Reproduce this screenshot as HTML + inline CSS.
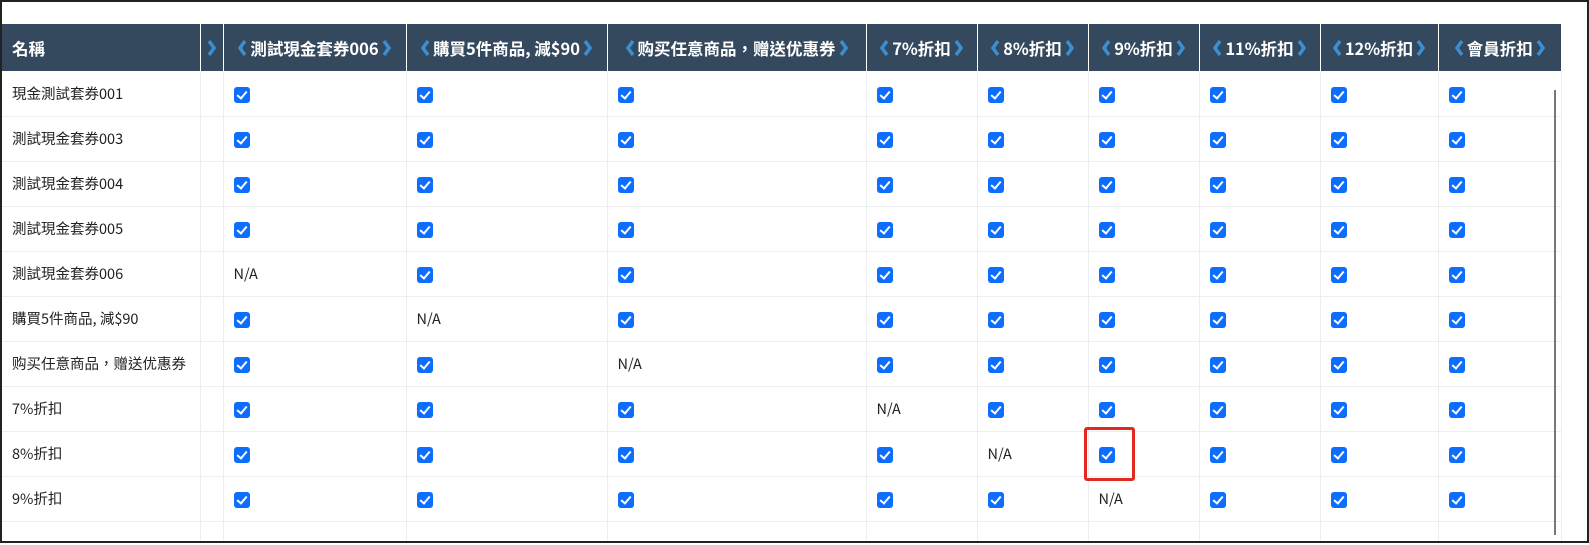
<!DOCTYPE html>
<html><head><meta charset="utf-8"><style>
*{box-sizing:border-box;margin:0;padding:0}
html,body{width:1589px;height:545px;overflow:hidden;background:#fff}
.frame{position:absolute;left:0;top:0;width:1589px;height:543px;border:2px solid #222;overflow:hidden}
table{position:absolute;left:0;top:22px;border-collapse:collapse;table-layout:fixed;font-family:"Noto Sans CJK TC","Liberation Sans",sans-serif}
th{background:#34495e;color:#fff;font-size:16.5px;font-weight:bold;height:47px;border-left:1px solid #fff;white-space:nowrap;padding:0}
th:first-child{border-left:none;text-align:left;padding-left:10px}
th .c{display:flex;align-items:center;justify-content:center;gap:2px}
td{height:45px;border:1px solid #eceef0;border-top:none;font-size:14.5px;color:#222;padding-left:10px;white-space:nowrap}
td:first-child{border-left:none;padding-left:10px}
.k{display:inline-block;width:16px;height:16px;background:#0d6efd;border-radius:3px;vertical-align:middle;position:relative}
.k:after{content:"";position:absolute;left:5px;top:2px;width:4px;height:8px;border:solid #fff;border-width:0 2px 2px 0;transform:rotate(40deg)}
svg{display:block}
.sb{position:absolute;left:1554px;top:90px;width:2px;height:445px;background:#777}
.red{position:absolute;left:1084px;top:427px;width:51px;height:54px;border:3px solid #e02a20;border-radius:3px}
</style></head><body>
<div class="frame">
<table>
<colgroup><col style="width:198px"><col style="width:23px"><col style="width:183px"><col style="width:201px"><col style="width:259px"><col style="width:111px"><col style="width:111px"><col style="width:111px"><col style="width:121px"><col style="width:118px"><col style="width:123px"></colgroup>
<tr>
<th>名稱</th>
<th style="border-left:1px solid #fff"><div class="c"><svg width="11" height="18"><polyline points="3,2 8,9 3,16" fill="none" stroke="#3b8ed0" stroke-width="3.5"/></svg></div></th>
<th><div class="c"><svg width="11" height="18"><polyline points="8,2 3,9 8,16" fill="none" stroke="#3b8ed0" stroke-width="3.5"/></svg>測試現金套券006<svg width="11" height="18"><polyline points="3,2 8,9 3,16" fill="none" stroke="#3b8ed0" stroke-width="3.5"/></svg></div></th>
<th><div class="c"><svg width="11" height="18"><polyline points="8,2 3,9 8,16" fill="none" stroke="#3b8ed0" stroke-width="3.5"/></svg>購買5件商品, 減$90<svg width="11" height="18"><polyline points="3,2 8,9 3,16" fill="none" stroke="#3b8ed0" stroke-width="3.5"/></svg></div></th>
<th><div class="c"><svg width="11" height="18"><polyline points="8,2 3,9 8,16" fill="none" stroke="#3b8ed0" stroke-width="3.5"/></svg>购买任意商品，赠送优惠券<svg width="11" height="18"><polyline points="3,2 8,9 3,16" fill="none" stroke="#3b8ed0" stroke-width="3.5"/></svg></div></th>
<th><div class="c"><svg width="11" height="18"><polyline points="8,2 3,9 8,16" fill="none" stroke="#3b8ed0" stroke-width="3.5"/></svg>7%折扣<svg width="11" height="18"><polyline points="3,2 8,9 3,16" fill="none" stroke="#3b8ed0" stroke-width="3.5"/></svg></div></th>
<th><div class="c"><svg width="11" height="18"><polyline points="8,2 3,9 8,16" fill="none" stroke="#3b8ed0" stroke-width="3.5"/></svg>8%折扣<svg width="11" height="18"><polyline points="3,2 8,9 3,16" fill="none" stroke="#3b8ed0" stroke-width="3.5"/></svg></div></th>
<th><div class="c"><svg width="11" height="18"><polyline points="8,2 3,9 8,16" fill="none" stroke="#3b8ed0" stroke-width="3.5"/></svg>9%折扣<svg width="11" height="18"><polyline points="3,2 8,9 3,16" fill="none" stroke="#3b8ed0" stroke-width="3.5"/></svg></div></th>
<th><div class="c"><svg width="11" height="18"><polyline points="8,2 3,9 8,16" fill="none" stroke="#3b8ed0" stroke-width="3.5"/></svg>11%折扣<svg width="11" height="18"><polyline points="3,2 8,9 3,16" fill="none" stroke="#3b8ed0" stroke-width="3.5"/></svg></div></th>
<th><div class="c"><svg width="11" height="18"><polyline points="8,2 3,9 8,16" fill="none" stroke="#3b8ed0" stroke-width="3.5"/></svg>12%折扣<svg width="11" height="18"><polyline points="3,2 8,9 3,16" fill="none" stroke="#3b8ed0" stroke-width="3.5"/></svg></div></th>
<th><div class="c"><svg width="11" height="18"><polyline points="8,2 3,9 8,16" fill="none" stroke="#3b8ed0" stroke-width="3.5"/></svg>會員折扣<svg width="11" height="18"><polyline points="3,2 8,9 3,16" fill="none" stroke="#3b8ed0" stroke-width="3.5"/></svg></div></th>
</tr>
<tr><td>現金測試套券001</td><td></td><td><i class="k"></i></td><td><i class="k"></i></td><td><i class="k"></i></td><td><i class="k"></i></td><td><i class="k"></i></td><td><i class="k"></i></td><td><i class="k"></i></td><td><i class="k"></i></td><td><i class="k"></i></td></tr>
<tr><td>測試現金套券003</td><td></td><td><i class="k"></i></td><td><i class="k"></i></td><td><i class="k"></i></td><td><i class="k"></i></td><td><i class="k"></i></td><td><i class="k"></i></td><td><i class="k"></i></td><td><i class="k"></i></td><td><i class="k"></i></td></tr>
<tr><td>測試現金套券004</td><td></td><td><i class="k"></i></td><td><i class="k"></i></td><td><i class="k"></i></td><td><i class="k"></i></td><td><i class="k"></i></td><td><i class="k"></i></td><td><i class="k"></i></td><td><i class="k"></i></td><td><i class="k"></i></td></tr>
<tr><td>測試現金套券005</td><td></td><td><i class="k"></i></td><td><i class="k"></i></td><td><i class="k"></i></td><td><i class="k"></i></td><td><i class="k"></i></td><td><i class="k"></i></td><td><i class="k"></i></td><td><i class="k"></i></td><td><i class="k"></i></td></tr>
<tr><td>測試現金套券006</td><td></td><td>N/A</td><td><i class="k"></i></td><td><i class="k"></i></td><td><i class="k"></i></td><td><i class="k"></i></td><td><i class="k"></i></td><td><i class="k"></i></td><td><i class="k"></i></td><td><i class="k"></i></td></tr>
<tr><td>購買5件商品, 減$90</td><td></td><td><i class="k"></i></td><td>N/A</td><td><i class="k"></i></td><td><i class="k"></i></td><td><i class="k"></i></td><td><i class="k"></i></td><td><i class="k"></i></td><td><i class="k"></i></td><td><i class="k"></i></td></tr>
<tr><td>购买任意商品，赠送优惠券</td><td></td><td><i class="k"></i></td><td><i class="k"></i></td><td>N/A</td><td><i class="k"></i></td><td><i class="k"></i></td><td><i class="k"></i></td><td><i class="k"></i></td><td><i class="k"></i></td><td><i class="k"></i></td></tr>
<tr><td>7%折扣</td><td></td><td><i class="k"></i></td><td><i class="k"></i></td><td><i class="k"></i></td><td>N/A</td><td><i class="k"></i></td><td><i class="k"></i></td><td><i class="k"></i></td><td><i class="k"></i></td><td><i class="k"></i></td></tr>
<tr><td>8%折扣</td><td></td><td><i class="k"></i></td><td><i class="k"></i></td><td><i class="k"></i></td><td><i class="k"></i></td><td>N/A</td><td><i class="k"></i></td><td><i class="k"></i></td><td><i class="k"></i></td><td><i class="k"></i></td></tr>
<tr><td>9%折扣</td><td></td><td><i class="k"></i></td><td><i class="k"></i></td><td><i class="k"></i></td><td><i class="k"></i></td><td><i class="k"></i></td><td>N/A</td><td><i class="k"></i></td><td><i class="k"></i></td><td><i class="k"></i></td></tr>
<tr><td></td><td></td><td></td><td></td><td></td><td></td><td></td><td></td><td></td><td></td><td></td></tr>
</table>
</div>
<div class="sb"></div>
<div class="red"></div>
</body></html>
